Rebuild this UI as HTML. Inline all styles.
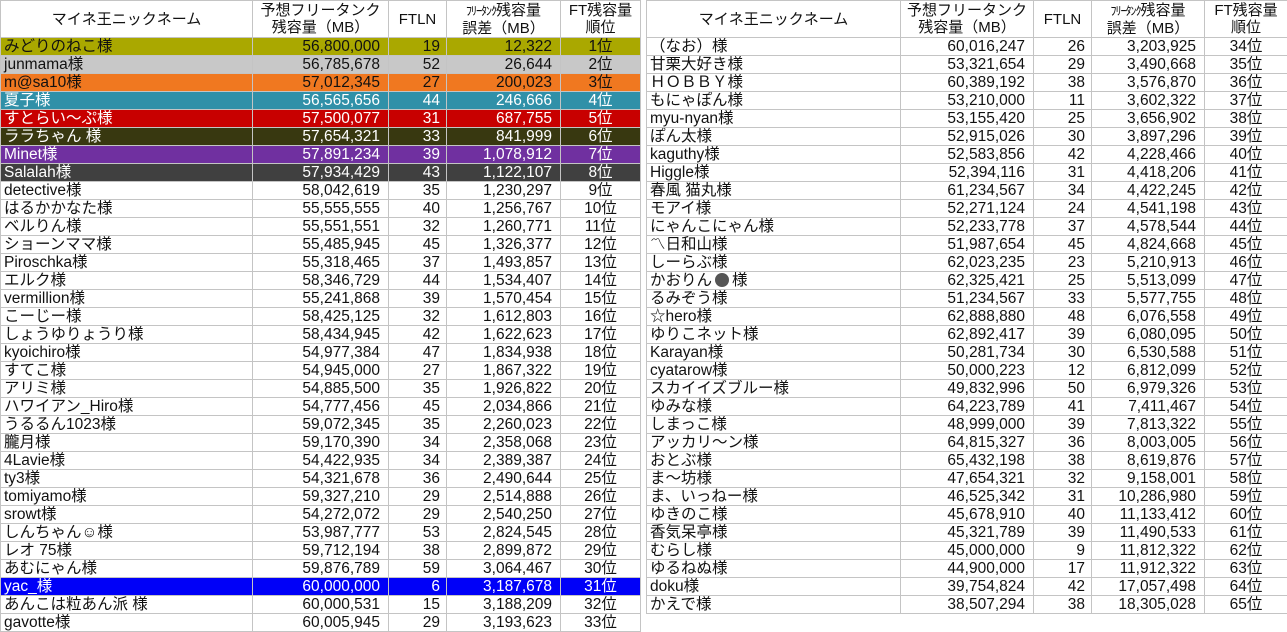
<!DOCTYPE html>
<html><head><meta charset="utf-8"><style>
body{margin:0;width:1287px;height:631px;background:#fff;overflow:hidden;font-family:"Liberation Sans","Noto Sans CJK JP",sans-serif;}
table{position:absolute;top:0;border-collapse:collapse;table-layout:fixed;font-size:15.5px;color:#111;}
td{border:1px solid #c4c4c4;height:17px;padding:0 3px;white-space:nowrap;overflow:hidden;line-height:17px;}
td div{height:17px;line-height:17px;margin-top:1px}
tr.h td{height:36px;line-height:17px;text-align:center;font-size:15px;}
td.n{text-align:right;padding-right:8px}
td.f{text-align:right;padding-right:6px}
td.r{text-align:center}
.w td{color:#fff}
</style></head><body>
<table style="left:0;width:640px">
<colgroup><col style="width:252px"><col style="width:136px"><col style="width:58px"><col style="width:114px"><col style="width:80px"></colgroup>
<tr class="h"><td>マイネ王ニックネーム</td><td>予想フリータンク<br>残容量（MB）</td><td>FTLN</td><td><span style="font-size:12px;letter-spacing:-1px">ﾌﾘｰﾀﾝｸ</span>残容量<br>誤差（MB）</td><td>FT残容量<br>順位</td></tr>
<tr style="background:#aaa800"><td>みどりのねこ様</td><td class="n">56,800,000</td><td class="f">19</td><td class="n">12,322</td><td class="r">1位</td></tr>
<tr style="background:#c8c8c8"><td>junmama様</td><td class="n">56,785,678</td><td class="f">52</td><td class="n">26,644</td><td class="r">2位</td></tr>
<tr style="background:#f07820"><td>m@sa10様</td><td class="n">57,012,345</td><td class="f">27</td><td class="n">200,023</td><td class="r">3位</td></tr>
<tr class="w" style="background:#3090a8"><td>夏子様</td><td class="n">56,565,656</td><td class="f">44</td><td class="n">246,666</td><td class="r">4位</td></tr>
<tr class="w" style="background:#c80000"><td>すとらい〜ぷ様</td><td class="n">57,500,077</td><td class="f">31</td><td class="n">687,755</td><td class="r">5位</td></tr>
<tr class="w" style="background:#383810"><td>ララちゃん 様</td><td class="n">57,654,321</td><td class="f">33</td><td class="n">841,999</td><td class="r">6位</td></tr>
<tr class="w" style="background:#7030a0"><td>Minet様</td><td class="n">57,891,234</td><td class="f">39</td><td class="n">1,078,912</td><td class="r">7位</td></tr>
<tr class="w" style="background:#404040"><td>Salalah様</td><td class="n">57,934,429</td><td class="f">43</td><td class="n">1,122,107</td><td class="r">8位</td></tr>
<tr><td>detective様</td><td class="n">58,042,619</td><td class="f">35</td><td class="n">1,230,297</td><td class="r">9位</td></tr>
<tr><td>はるかかなた様</td><td class="n">55,555,555</td><td class="f">40</td><td class="n">1,256,767</td><td class="r">10位</td></tr>
<tr><td>ベルりん様</td><td class="n">55,551,551</td><td class="f">32</td><td class="n">1,260,771</td><td class="r">11位</td></tr>
<tr><td>ショーンママ様</td><td class="n">55,485,945</td><td class="f">45</td><td class="n">1,326,377</td><td class="r">12位</td></tr>
<tr><td>Piroschka様</td><td class="n">55,318,465</td><td class="f">37</td><td class="n">1,493,857</td><td class="r">13位</td></tr>
<tr><td>エルク様</td><td class="n">58,346,729</td><td class="f">44</td><td class="n">1,534,407</td><td class="r">14位</td></tr>
<tr><td>vermillion様</td><td class="n">55,241,868</td><td class="f">39</td><td class="n">1,570,454</td><td class="r">15位</td></tr>
<tr><td>こーじー様</td><td class="n">58,425,125</td><td class="f">32</td><td class="n">1,612,803</td><td class="r">16位</td></tr>
<tr><td>しょうゆりょうり様</td><td class="n">58,434,945</td><td class="f">42</td><td class="n">1,622,623</td><td class="r">17位</td></tr>
<tr><td>kyoichiro様</td><td class="n">54,977,384</td><td class="f">47</td><td class="n">1,834,938</td><td class="r">18位</td></tr>
<tr><td>すてこ様</td><td class="n">54,945,000</td><td class="f">27</td><td class="n">1,867,322</td><td class="r">19位</td></tr>
<tr><td>アリミ様</td><td class="n">54,885,500</td><td class="f">35</td><td class="n">1,926,822</td><td class="r">20位</td></tr>
<tr><td>ハワイアン_Hiro様</td><td class="n">54,777,456</td><td class="f">45</td><td class="n">2,034,866</td><td class="r">21位</td></tr>
<tr><td>うるるん1023様</td><td class="n">59,072,345</td><td class="f">35</td><td class="n">2,260,023</td><td class="r">22位</td></tr>
<tr><td>朧月様</td><td class="n">59,170,390</td><td class="f">34</td><td class="n">2,358,068</td><td class="r">23位</td></tr>
<tr><td>4Lavie様</td><td class="n">54,422,935</td><td class="f">34</td><td class="n">2,389,387</td><td class="r">24位</td></tr>
<tr><td>ty3様</td><td class="n">54,321,678</td><td class="f">36</td><td class="n">2,490,644</td><td class="r">25位</td></tr>
<tr><td>tomiyamo様</td><td class="n">59,327,210</td><td class="f">29</td><td class="n">2,514,888</td><td class="r">26位</td></tr>
<tr><td>srowt様</td><td class="n">54,272,072</td><td class="f">29</td><td class="n">2,540,250</td><td class="r">27位</td></tr>
<tr><td>しんちゃん☺様</td><td class="n">53,987,777</td><td class="f">53</td><td class="n">2,824,545</td><td class="r">28位</td></tr>
<tr><td>レオ 75様</td><td class="n">59,712,194</td><td class="f">38</td><td class="n">2,899,872</td><td class="r">29位</td></tr>
<tr><td>あむにゃん様</td><td class="n">59,876,789</td><td class="f">59</td><td class="n">3,064,467</td><td class="r">30位</td></tr>
<tr class="w" style="background:#0000f8"><td>yac_様</td><td class="n">60,000,000</td><td class="f">6</td><td class="n">3,187,678</td><td class="r">31位</td></tr>
<tr><td>あんこは粒あん派 様</td><td class="n">60,000,531</td><td class="f">15</td><td class="n">3,188,209</td><td class="r">32位</td></tr>
<tr><td>gavotte様</td><td class="n">60,005,945</td><td class="f">29</td><td class="n">3,193,623</td><td class="r">33位</td></tr>
</table>
<table style="left:646px;width:641px">
<colgroup><col style="width:254px"><col style="width:133px"><col style="width:58px"><col style="width:113px"><col style="width:83px"></colgroup>
<tr class="h"><td>マイネ王ニックネーム</td><td>予想フリータンク<br>残容量（MB）</td><td>FTLN</td><td><span style="font-size:12px;letter-spacing:-1px">ﾌﾘｰﾀﾝｸ</span>残容量<br>誤差（MB）</td><td>FT残容量<br>順位</td></tr>
<tr><td>（なお）様</td><td class="n">60,016,247</td><td class="f">26</td><td class="n">3,203,925</td><td class="r">34位</td></tr>
<tr><td>甘栗大好き様</td><td class="n">53,321,654</td><td class="f">29</td><td class="n">3,490,668</td><td class="r">35位</td></tr>
<tr><td>ＨＯＢＢＹ様</td><td class="n">60,389,192</td><td class="f">38</td><td class="n">3,576,870</td><td class="r">36位</td></tr>
<tr><td>もにゃぽん様</td><td class="n">53,210,000</td><td class="f">11</td><td class="n">3,602,322</td><td class="r">37位</td></tr>
<tr><td>myu-nyan様</td><td class="n">53,155,420</td><td class="f">25</td><td class="n">3,656,902</td><td class="r">38位</td></tr>
<tr><td>ぽん太様</td><td class="n">52,915,026</td><td class="f">30</td><td class="n">3,897,296</td><td class="r">39位</td></tr>
<tr><td>kaguthy様</td><td class="n">52,583,856</td><td class="f">42</td><td class="n">4,228,466</td><td class="r">40位</td></tr>
<tr><td>Higgle様</td><td class="n">52,394,116</td><td class="f">31</td><td class="n">4,418,206</td><td class="r">41位</td></tr>
<tr><td>春風 猫丸様</td><td class="n">61,234,567</td><td class="f">34</td><td class="n">4,422,245</td><td class="r">42位</td></tr>
<tr><td>モアイ様</td><td class="n">52,271,124</td><td class="f">24</td><td class="n">4,541,198</td><td class="r">43位</td></tr>
<tr><td>にゃんこにゃん様</td><td class="n">52,233,778</td><td class="f">37</td><td class="n">4,578,544</td><td class="r">44位</td></tr>
<tr><td>〽日和山様</td><td class="n">51,987,654</td><td class="f">45</td><td class="n">4,824,668</td><td class="r">45位</td></tr>
<tr><td>しーらぶ様</td><td class="n">62,023,235</td><td class="f">23</td><td class="n">5,210,913</td><td class="r">46位</td></tr>
<tr><td>かおりん<span style="display:inline-block;width:14px;height:14px;border-radius:50%;background:#555;vertical-align:-2px;margin:0 3px"></span>様</td><td class="n">62,325,421</td><td class="f">25</td><td class="n">5,513,099</td><td class="r">47位</td></tr>
<tr><td>るみぞう様</td><td class="n">51,234,567</td><td class="f">33</td><td class="n">5,577,755</td><td class="r">48位</td></tr>
<tr><td>☆hero様</td><td class="n">62,888,880</td><td class="f">48</td><td class="n">6,076,558</td><td class="r">49位</td></tr>
<tr><td>ゆりこネット様</td><td class="n">62,892,417</td><td class="f">39</td><td class="n">6,080,095</td><td class="r">50位</td></tr>
<tr><td>Karayan様</td><td class="n">50,281,734</td><td class="f">30</td><td class="n">6,530,588</td><td class="r">51位</td></tr>
<tr><td>cyatarow様</td><td class="n">50,000,223</td><td class="f">12</td><td class="n">6,812,099</td><td class="r">52位</td></tr>
<tr><td>スカイイズブルー様</td><td class="n">49,832,996</td><td class="f">50</td><td class="n">6,979,326</td><td class="r">53位</td></tr>
<tr><td>ゆみな様</td><td class="n">64,223,789</td><td class="f">41</td><td class="n">7,411,467</td><td class="r">54位</td></tr>
<tr><td>しまっこ様</td><td class="n">48,999,000</td><td class="f">39</td><td class="n">7,813,322</td><td class="r">55位</td></tr>
<tr><td>アッカリ〜ン様</td><td class="n">64,815,327</td><td class="f">36</td><td class="n">8,003,005</td><td class="r">56位</td></tr>
<tr><td>おとぶ様</td><td class="n">65,432,198</td><td class="f">38</td><td class="n">8,619,876</td><td class="r">57位</td></tr>
<tr><td>ま〜坊様</td><td class="n">47,654,321</td><td class="f">32</td><td class="n">9,158,001</td><td class="r">58位</td></tr>
<tr><td>ま、いっねー様</td><td class="n">46,525,342</td><td class="f">31</td><td class="n">10,286,980</td><td class="r">59位</td></tr>
<tr><td>ゆきのこ様</td><td class="n">45,678,910</td><td class="f">40</td><td class="n">11,133,412</td><td class="r">60位</td></tr>
<tr><td>香気呆亭様</td><td class="n">45,321,789</td><td class="f">39</td><td class="n">11,490,533</td><td class="r">61位</td></tr>
<tr><td>むらし様</td><td class="n">45,000,000</td><td class="f">9</td><td class="n">11,812,322</td><td class="r">62位</td></tr>
<tr><td>ゆるねぬ様</td><td class="n">44,900,000</td><td class="f">17</td><td class="n">11,912,322</td><td class="r">63位</td></tr>
<tr><td>doku様</td><td class="n">39,754,824</td><td class="f">42</td><td class="n">17,057,498</td><td class="r">64位</td></tr>
<tr><td>かえで様</td><td class="n">38,507,294</td><td class="f">38</td><td class="n">18,305,028</td><td class="r">65位</td></tr>
</table>
</body></html>
